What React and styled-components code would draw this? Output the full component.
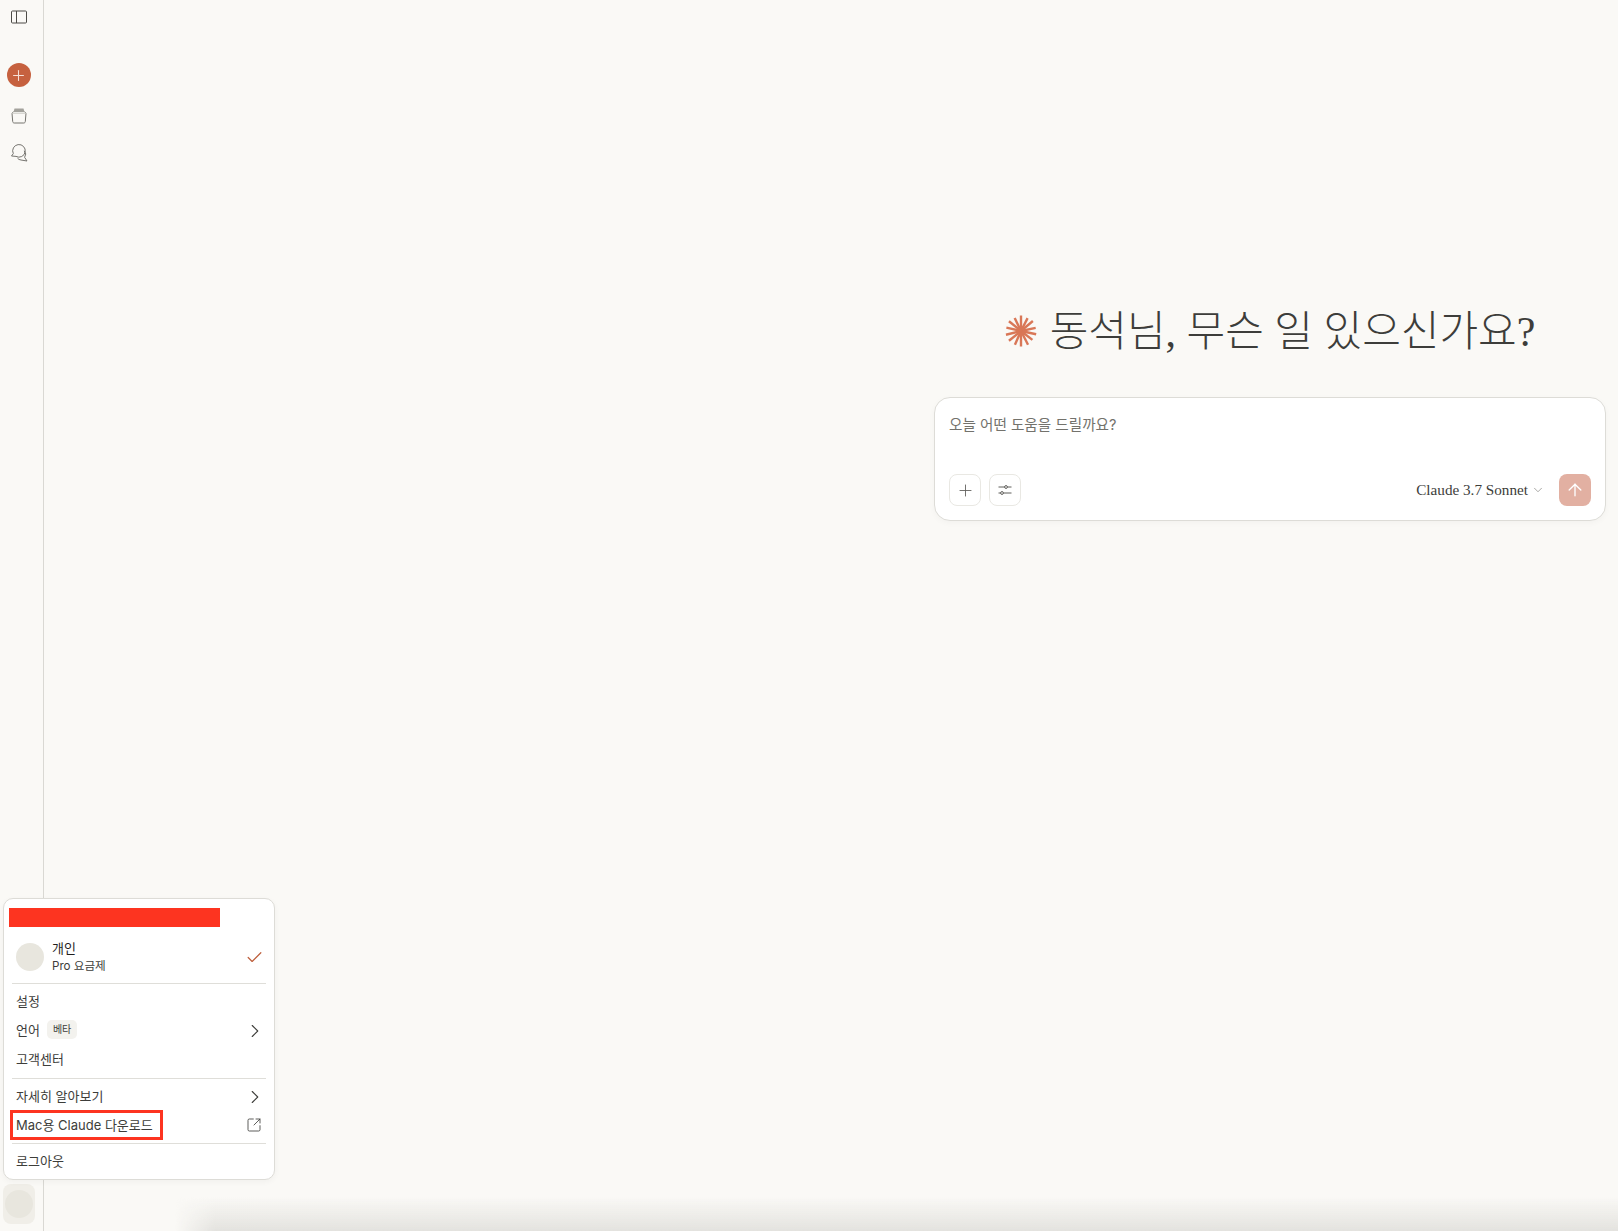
import React from "react";
import styled, { createGlobalStyle } from "styled-components";
import { Plus, ChevronRight, ChevronDown, Check, ArrowUp, SquareArrowOutUpRight } from "lucide-react";

const sans = `Inter, "Noto Sans CJK KR", sans-serif`;

const rays = [
  [0, 0.5], [27, 1.5], [50, 0.5], [78, 1], [102, 0.5], [128, 1.5], [153, 0.5], [180, 0.5],
  [204, 1], [231, 0.5], [256, 0.5], [283, 1], [309, 0.5], [334, 1.5],
];

export default function App() {
  return (
    <Page>
      <GlobalStyle />
      <Sidebar>
        <IconButton>
          <svg width="18" height="16" viewBox="0 0 18 16" fill="none" stroke="#4c4b47" strokeWidth="1">
            <rect x="1.5" y="2" width="15" height="12" rx="1" />
            <path d="M6.500 2v12" />
          </svg>
        </IconButton>
        <NewChat>
          <Plus size={17} color="#f5dfd6" strokeWidth={1.5} />
        </NewChat>
        <NavIcons>
          <IconButton>
            <svg width="18" height="18" viewBox="0 0 18 18" fill="none" stroke="#75746f" strokeWidth="1">
              <path d="M4.500 1.500h9l1 3.500h-11Z" fill="#a3a29c" stroke="none" />
              <path d="M3.500 4.800 2 6.200l.7 8.300c.1.900.6 1.500 1.500 1.500h9.600c.9 0 1.400-.6 1.500-1.500L16 6.200l-1.500-1.400" />
              <path d="M2 6.200h14" stroke="#c9c8c2" />
            </svg>
          </IconButton>
          <IconButton>
            <svg width="18" height="18" viewBox="0 0 18 18" fill="none" stroke="#75746f" strokeWidth="1">
              <path d="M1.500 12 3.300 9.600A6.300 6.300 0 1 1 6 12.400Z" />
              <path d="M14.200 6.800A5 5 0 0 1 14.600 13.300L17 17l-6-1a5 5 0 0 1-3.500-1.800" />
            </svg>
          </IconButton>
        </NavIcons>
        <SidebarFooter>
          <FooterAvatar />
        </SidebarFooter>
      </Sidebar>

      <Main>
        <Column>
          <Greeting>
            <Spark width="32" height="32" viewBox="0 0 32 32" stroke="#d97757" strokeWidth="2.4">
              {rays.map(([a, inset]) => (
                <line key={a} x1="16" y1="16" x2="16" y2={inset} transform={`rotate(${a} 16 16)`} />
              ))}
            </Spark>
            <GreetingText>동석님, 무슨 일 있으신가요?</GreetingText>
          </Greeting>
          <Composer>
            <Placeholder>오늘 어떤 도움을 드릴까요?</Placeholder>
            <ComposerBar>
              <ToolButton>
                <Plus size={19} color="#5f5e5a" strokeWidth={1.1} />
              </ToolButton>
              <ToolButton>
                <svg width="16" height="16" viewBox="0 0 16 16" fill="none" stroke="#5f5e5a" strokeWidth="1">
                  <path d="M1.500 5h6.200M10.300 5h4.200M1.500 11h2.200M6.300 11h8.200" />
                  <circle cx="9" cy="5" r="1.400" />
                  <circle cx="5" cy="11" r="1.400" />
                </svg>
              </ToolButton>
              <ModelPicker>
                Claude 3.7 Sonnet
                <ChevronDown size={14} color="#85847f" strokeWidth={1.2} />
              </ModelPicker>
              <SendButton>
                <ArrowUp size={20} color="#fff" strokeWidth={1.6} />
              </SendButton>
            </ComposerBar>
          </Composer>
        </Column>
      </Main>

      <BottomFade />

      <Menu>
        <Redacted />
        <AccountRow>
          <Avatar />
          <AccountText>
            <AccountName>개인</AccountName>
            <AccountPlan>Pro 요금제</AccountPlan>
          </AccountText>
          <AccountCheck size={19} color="#bd5d3a" strokeWidth={1.5} />
        </AccountRow>
        <Divider $top={2} />
        <MenuRow>설정</MenuRow>
        <MenuRow>
          <RowLabel>
            언어
            <Badge>베타</Badge>
          </RowLabel>
          <RowChevron size={22} color="#3d3d3a" strokeWidth={1.2} />
        </MenuRow>
        <MenuRow>고객센터</MenuRow>
        <Divider $top={4} />
        <MenuRow>
          자세히 알아보기
          <RowChevron size={22} color="#3d3d3a" strokeWidth={1.2} />
        </MenuRow>
        <MenuRow>
          <Highlighted>Mac용 Claude 다운로드</Highlighted>
          <ExternalIcon size={16} color="#3d3d3a" strokeWidth={1.25} />
        </MenuRow>
        <Divider $top={3} />
        <MenuRow>로그아웃</MenuRow>
      </Menu>
    </Page>
  );
}

const GlobalStyle = createGlobalStyle`
  * { box-sizing: border-box; }
  body {
    margin: 0;
    background: #faf9f6;
    font-family: ${sans};
    color: #3d3d3a;
  }
`;

const Page = styled.div`
  display: flex;
  position: relative;
  height: 100vh;
  overflow: hidden;
`;

const Sidebar = styled.aside`
  display: flex;
  flex-direction: column;
  align-items: center;
  width: 44px;
  padding: 8px 6px 7px 0;
  border-right: 1px solid #d9d8d3;
  flex-shrink: 0;
`;

const IconButton = styled.div`
  display: flex;
  align-items: center;
  justify-content: center;
  width: 32px;
  height: 18px;
`;

const NewChat = styled.div`
  display: flex;
  align-items: center;
  justify-content: center;
  width: 24px;
  height: 24px;
  margin-top: 37px;
  border-radius: 50%;
  background: #c6613f;
`;

const NavIcons = styled.div`
  display: flex;
  flex-direction: column;
  gap: 19px;
  margin-top: 20px;
`;

const SidebarFooter = styled.div`
  margin-top: auto;
`;

const FooterAvatar = styled.div`
  display: flex;
  width: 32px;
  height: 40px;
  border-radius: 8px;
  background: #f0eee8;

  &::after {
    content: "";
    width: 28px;
    height: 28px;
    margin: auto;
    border-radius: 50%;
    background: #e8e6de;
  }
`;

const Main = styled.main`
  flex: 1;
  display: flex;
  justify-content: flex-end;
  padding: 301px 12px 0 0;
`;

const Column = styled.div`
  display: flex;
  flex-direction: column;
  width: 672px;
`;

const Greeting = styled.div`
  display: flex;
  align-items: center;
  justify-content: center;
  gap: 13px;
  height: 52px;
  margin-bottom: 44px;
`;

const Spark = styled.svg`
  margin-top: 8px;
  flex-shrink: 0;
`;

const GreetingText = styled.h1`
  margin: 0;
  font-family: "Liberation Serif", "Noto Sans CJK KR", serif;
  font-size: 42px;
  font-weight: 300;
  color: #3d3d3a;
  white-space: nowrap;
`;

const Composer = styled.div`
  display: flex;
  flex-direction: column;
  justify-content: space-between;
  height: 124px;
  padding: 16px 14px 14px 14px;
  background: #fff;
  border: 1px solid #dddcd7;
  border-radius: 16px;
  box-shadow: 0 2px 6px rgba(0, 0, 0, 0.03);
`;

const Placeholder = styled.div`
  font-size: 14.6px;
  line-height: 22px;
  color: #73726c;
`;

const ComposerBar = styled.div`
  display: flex;
  align-items: center;
  gap: 8px;
`;

const ToolButton = styled.div`
  display: flex;
  align-items: center;
  justify-content: center;
  width: 32px;
  height: 32px;
  border: 1px solid #e9e8e3;
  border-radius: 8px;
`;

const ModelPicker = styled.div`
  display: flex;
  align-items: center;
  gap: 3px;
  margin-left: auto;
  margin-right: 6px;
  font-family: "Liberation Serif", serif;
  font-size: 15.2px;
  color: #3d3d3a;
`;

const SendButton = styled.div`
  display: flex;
  align-items: center;
  justify-content: center;
  width: 32px;
  height: 32px;
  border-radius: 8px;
  background: #e2b0a2;
`;

const BottomFade = styled.div`
  position: absolute;
  left: 175px;
  right: 0;
  bottom: 0;
  height: 34px;
  background: linear-gradient(to top, #e3e2de, rgba(250, 249, 246, 0));
  -webkit-mask-image: linear-gradient(to right, transparent, #000 40px);
  mask-image: linear-gradient(to right, transparent, #000 40px);
`;

const Menu = styled.div`
  position: absolute;
  left: 3px;
  bottom: 51px;
  width: 272px;
  height: 282px;
  padding: 9px 8px 0;
  background: #fff;
  border: 1px solid #dddcd7;
  border-radius: 10px;
  box-shadow: 0 2px 6px rgba(0, 0, 0, 0.04);
  font-size: 13px;
`;

const Redacted = styled.div`
  width: 211px;
  height: 19px;
  margin-left: -3px;
  background: #fd3420;
`;

const AccountRow = styled.div`
  display: flex;
  align-items: center;
  gap: 8px;
  height: 48px;
  margin-top: 6px;
  padding: 0 4px;
`;

const Avatar = styled.div`
  width: 28px;
  height: 28px;
  border-radius: 50%;
  background: #e8e6de;
`;

const AccountText = styled.div`
  flex: 1;
  display: flex;
  flex-direction: column;
`;

const AccountName = styled.div`
  font-size: 13px;
  line-height: 18.500px;
  color: #1f1e1d;
`;

const AccountPlan = styled.div`
  font-size: 11.600px;
  line-height: 18.500px;
`;

const AccountCheck = styled(Check)`
  margin-right: -2px;
`;

const Divider = styled.div`
  height: 1px;
  background: #dfded9;
  margin: ${(p) => p.$top}px 0 3px;
`;

const MenuRow = styled.div`
  display: flex;
  align-items: center;
  justify-content: space-between;
  height: 29px;
  padding: 0 4px 2px;
`;

const RowLabel = styled.div`
  display: flex;
  align-items: center;
  gap: 7px;
`;

const RowChevron = styled(ChevronRight)`
  margin: 2px -4px 0 0;
`;

const ExternalIcon = styled(SquareArrowOutUpRight)`
  margin-top: 1px;
`;

const Badge = styled.span`
  padding: 2px 6px;
  border-radius: 5px;
  background: #f3f2ee;
  font-size: 10px;
  line-height: 15px;
`;

const Highlighted = styled.span`
  position: relative;

  &::after {
    content: "";
    position: absolute;
    left: -6px;
    right: -10px;
    top: -5px;
    bottom: -6px;
    border: 3px solid #fd3420;
  }
`;
